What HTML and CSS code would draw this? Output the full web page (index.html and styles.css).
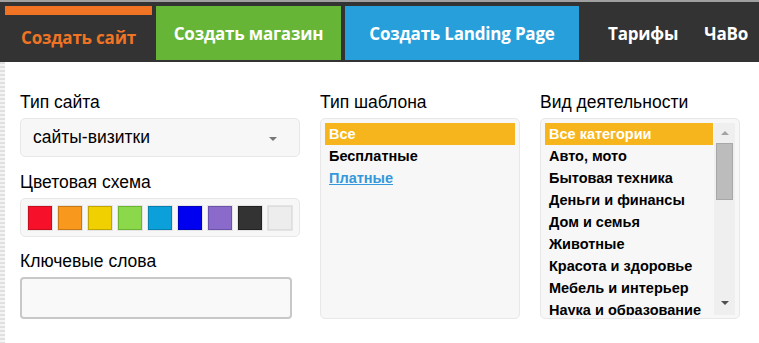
FILE: index.html
```html
<!DOCTYPE html>
<html lang="ru">
<head>
    <meta charset="UTF-8">
    <title>Конструктор сайтов</title>
    <link rel="stylesheet" href="styles.css">
</head>
<body>

    <div class="topbar">
        <a href="#" class="tab tab-site">Создать сайт</a>
        <a href="#" class="tab tab-shop">Создать магазин</a>
        <a href="#" class="tab tab-landing">Создать Landing Page</a>
        <a href="#" class="link">Тарифы</a>
        <a href="#" class="link">ЧаВо</a>
    </div>

    <div class="page">
        <div class="filters">
            <div class="col col-main">
                <div class="label">Тип сайта</div>
                <div class="select">
                    <span>сайты-визитки</span>
                    <span class="caret"></span>
                </div>

                <div class="label">Цветовая схема</div>
                <div class="colors">
                    <span class="swatch" style="background:#f7102a;border-color:#c80c20"></span>
                    <span class="swatch" style="background:#f8981d;border-color:#c87814"></span>
                    <span class="swatch" style="background:#f0d000;border-color:#c0a600"></span>
                    <span class="swatch" style="background:#8bd94b;border-color:#6cb434"></span>
                    <span class="swatch" style="background:#0ba0d9;border-color:#0880b0"></span>
                    <span class="swatch" style="background:#0000f0;border-color:#0000c0"></span>
                    <span class="swatch" style="background:#8a6bcc;border-color:#6c52a8"></span>
                    <span class="swatch" style="background:#333333;border-color:#222222"></span>
                    <span class="swatch" style="background:#ededed;border-color:#dddddd"></span>
                </div>

                <div class="label">Ключевые слова</div>
                <div class="keywords"></div>
            </div>

            <div class="col">
                <div class="label">Тип шаблона</div>
                <div class="listbox">
                    <div class="list">
                        <div class="item active">Все</div>
                        <div class="item">Бесплатные</div>
                        <div class="item"><a href="#">Платные</a></div>
                    </div>
                </div>
            </div>

            <div class="col">
                <div class="label">Вид деятельности</div>
                <div class="listbox">
                    <div class="list scroll">
                        <div class="items">
                            <div class="item active">Все категории</div>
                            <div class="item">Авто, мото</div>
                            <div class="item">Бытовая техника</div>
                            <div class="item">Деньги и финансы</div>
                            <div class="item">Дом и семья</div>
                            <div class="item">Животные</div>
                            <div class="item">Красота и здоровье</div>
                            <div class="item">Мебель и интерьер</div>
                            <div class="item">Наука и образование</div>
                        </div>
                        <div class="scrollbar">
                            <span class="arrow up"></span>
                            <span class="thumb"></span>
                            <span class="arrow down"></span>
                        </div>
                    </div>
                </div>
            </div>
        </div>
    </div>

</body>
</html>
```

FILE: styles.css
```css
body {
    margin: 0;
    padding: 0;
    font-family: "Liberation Sans", Arial, sans-serif;
    background-color: #fff;
    color: #000;
    overflow: hidden;
}
.topbar {
    display: flex;
    align-items: stretch;
    height: 54px;
    padding: 4px 0 2px 5px;
    background-color: #333;
    border-top: 2px solid #a0a0a0;
}
.tab, .link {
    display: flex;
    align-items: center;
    justify-content: center;
    font-family: "Open Sans", sans-serif;
    font-weight: 700;
    font-size: 17px;
    color: #fff;
    text-decoration: none;
    letter-spacing: -0.2px;
    box-sizing: border-box;
}
.tab-site {
    width: 147px;
    color: #f07424;
    border-top: 9px solid #f07424;
    padding-bottom: 1px;
}
.tab-shop {
    width: 185px;
    margin-left: 4px;
    background-color: #67b536;
}
.tab-landing {
    width: 234px;
    margin-left: 4px;
    background-color: #279fdb;
}
.link {
    margin-left: 29px;
}
.link + .link {
    margin-left: 26px;
}
.page {
    height: 251px;
    border-left: 5px solid transparent;
    border-image: repeating-linear-gradient(to bottom, #e0e0e0 0, #e0e0e0 2px, #f4f4f4 2px, #f4f4f4 4px) 0 0 0 5;
    padding: 30px 0 0 15px;
    overflow: hidden;
}
.filters {
    display: flex;
    gap: 20px;
}
.col {
    width: 200px;
}
.col-main {
    width: 280px;
}
.label {
    font-size: 17.5px;
    line-height: 20px;
    margin-bottom: 6px;
}
.select {
    display: flex;
    justify-content: space-between;
    align-items: center;
    height: 37px;
    padding: 0 22px 0 12px;
    background-color: #f7f7f7;
    border: 1px solid #e8e8e8;
    border-radius: 5px;
    font-size: 17.5px;
    margin-bottom: 15px;
}
.caret {
    width: 0;
    height: 0;
    border-left: 4px solid transparent;
    border-right: 4px solid transparent;
    border-top: 4px solid #777;
    margin-top: 2px;
}
.colors {
    display: flex;
    gap: 4px;
    height: 37px;
    padding: 0 6px;
    align-items: center;
    background-color: #f7f7f7;
    border: 1px solid #e8e8e8;
    border-radius: 5px;
    margin-bottom: 14px;
}
.swatch {
    width: 24px;
    height: 24px;
    border: 1px solid;
    box-shadow: 0 0 0 1px #e4e4e4;
    margin: 0 1px;
    box-sizing: border-box;
}
.keywords {
    width: 268px;
    height: 38px;
    background-color: #f9f9f9;
    border: 2px solid #c8c8c8;
    border-radius: 4px;
    box-sizing: content-box;
    margin-top: 1px;
}
.listbox {
    height: 191px;
    padding: 4px;
    background-color: #f7f7f7;
    border: 1px solid #e8e8e8;
    border-radius: 5px;
    overflow: hidden;
}
.list {
    font-size: 14.5px;
    font-weight: 700;
}
.item {
    height: 22px;
    line-height: 22px;
    padding-left: 4px;
    white-space: nowrap;
}
.item.active {
    background-color: #f7b51d;
    color: #fff;
}
.item a {
    color: #3598db;
}
.list.scroll {
    display: flex;
    height: 192px;
    overflow: hidden;
}
.items {
    width: 169px;
}
.scrollbar {
    display: flex;
    flex-direction: column;
    align-items: center;
    width: 21px;
    margin-left: 1px;
    background-color: #efefef;
}
.arrow {
    width: 0;
    height: 0;
    border-left: 4px solid transparent;
    border-right: 4px solid transparent;
}
.arrow.up {
    border-bottom: 4px solid #a3a3a3;
    margin: 8px 0 8px;
}
.arrow.down {
    border-top: 4px solid #505050;
    margin-top: auto;
    margin-bottom: 10px;
}
.thumb {
    width: 17px;
    height: 57px;
    background-color: #bcbcbc;
    border: 1px solid #a8a8a8;
    box-sizing: border-box;
}
```
